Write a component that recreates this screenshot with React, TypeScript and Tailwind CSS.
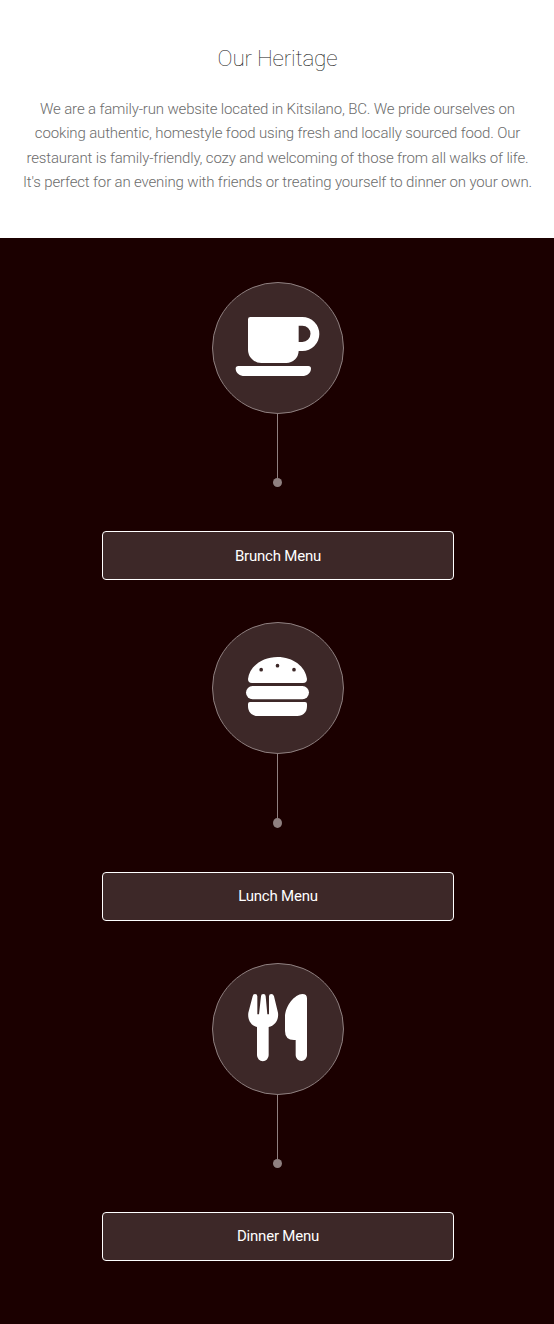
import type { ReactNode } from 'react';

const iconClass = 'block size-full fill-white';

function CoffeeIcon() {
  return (
    <svg viewBox="33 33 390 390" className={iconClass} aria-hidden="true">
      <path
        fillRule="evenodd"
        d="M145 135H301A51 51 0 0 1 301 237H290A37 37 0 0 1 253 273H178A40 40 0 0 1 138 233V142Q138 135 145 135ZM290 161V210H301A24.5 24.5 0 0 0 301 161Z"
      />
      <path d="M109 282H319Q327 282 327 290C327 303 314 312 301 312H127C114 312 101 303 101 290Q101 282 109 282Z" />
    </svg>
  );
}

function BurgerIcon() {
  return (
    <svg viewBox="33 33 390 390" className={iconClass} aria-hidden="true">
      <path
        fillRule="evenodd"
        d="M150 213Q138 213 138 201C142 164 180 135 226.500 135S311 164 315 201Q315 213 303 213ZM172 173a5.500 5.500 0 1 0 11 0a5.500 5.500 0 1 0 -11 0ZM221 161a5.500 5.500 0 1 0 11 0a5.500 5.500 0 1 0 -11 0ZM270.500 173a5.500 5.500 0 1 0 11 0a5.500 5.500 0 1 0 -11 0Z"
      />
      <rect x="132" y="222" width="189" height="39.500" rx="19.700" />
      <path d="M144 270H309Q315 270 315 276V282C315 301 303 312 286 312H167C150 312 138 301 138 282V276Q138 270 144 270Z" />
    </svg>
  );
}

function CutleryIcon() {
  return (
    <svg viewBox="33 33 390 390" className={iconClass} aria-hidden="true">
      <path d="M159 123Q166 123 166 130V184H171L177 130Q177 123 184 123T191 130L196 184H201V130Q201 123 208 123Q214 123 216 130L228 179C231 202 218 218 200 222V307A17.500 17.500 0 0 1 165 307V222C148 218 136 202 139 179L152 130Q153 123 159 123Z" />
      <path d="M301 123Q315 123 315 136V307A17 17 0 0 1 281 307V261H276Q249 261 249 234V193C249 157 279 124 301 123Z" />
    </svg>
  );
}

interface MenuItemProps {
  icon: ReactNode;
  label: string;
  dotClass?: string;
  labelClass?: string;
}

function MenuItem({ icon, label, dotClass = 'h-[9px]', labelClass = '' }: MenuItemProps) {
  return (
    <div className="flex w-full flex-col items-center">
      <div className="size-[132px] rounded-full border border-[#8f8080] bg-[#3d2828]">{icon}</div>
      <div className="mr-px flex w-[9px] flex-col items-center">
        <div className="h-16 w-px bg-[#8f8080]" />
        <div className={`w-[9px] rounded-[50%] bg-[#8f8080] ${dotClass}`} />
      </div>
      <button
        type="button"
        className={`mt-11 h-[49px] w-[352px] rounded-[4px] border border-white bg-[#3d2828] text-[15px] font-normal tracking-[-0.200px] text-white ${labelClass}`}
      >
        {label}
      </button>
    </div>
  );
}

export default function App() {
  return (
    <main className="flex h-[1324px] flex-col bg-white font-['Roboto',sans-serif]">
      <section className="h-[238px] pt-[43px] pl-px text-center">
        <h2 className="text-[22.500px] leading-[30px] font-thin tracking-[-0.200px] text-[#111]">
          Our Heritage
        </h2>
        <p className="mt-6 text-[15px] leading-[24.400px] font-light tracking-[-0.150px] text-[#6c6c6c]">
          We are a family-run website located in Kitsilano, BC. We pride ourselves on
          <br />
          cooking authentic, homestyle food using fresh and locally sourced food. Our
          <br />
          restaurant is family-friendly, cozy and welcoming of those from all walks of life.
          <br />
          It's perfect for an evening with friends or treating yourself to dinner on your own.
        </p>
      </section>
      <section className="flex flex-1 flex-col items-center gap-[42px] bg-[#1b0000] pt-11 pl-[2px]">
        <MenuItem icon={<CoffeeIcon />} label="Brunch Menu" labelClass="pt-0.5" />
        <MenuItem icon={<BurgerIcon />} label="Lunch Menu" dotClass="h-[10px]" />
        <MenuItem icon={<CutleryIcon />} label="Dinner Menu" />
      </section>
    </main>
  );
}
